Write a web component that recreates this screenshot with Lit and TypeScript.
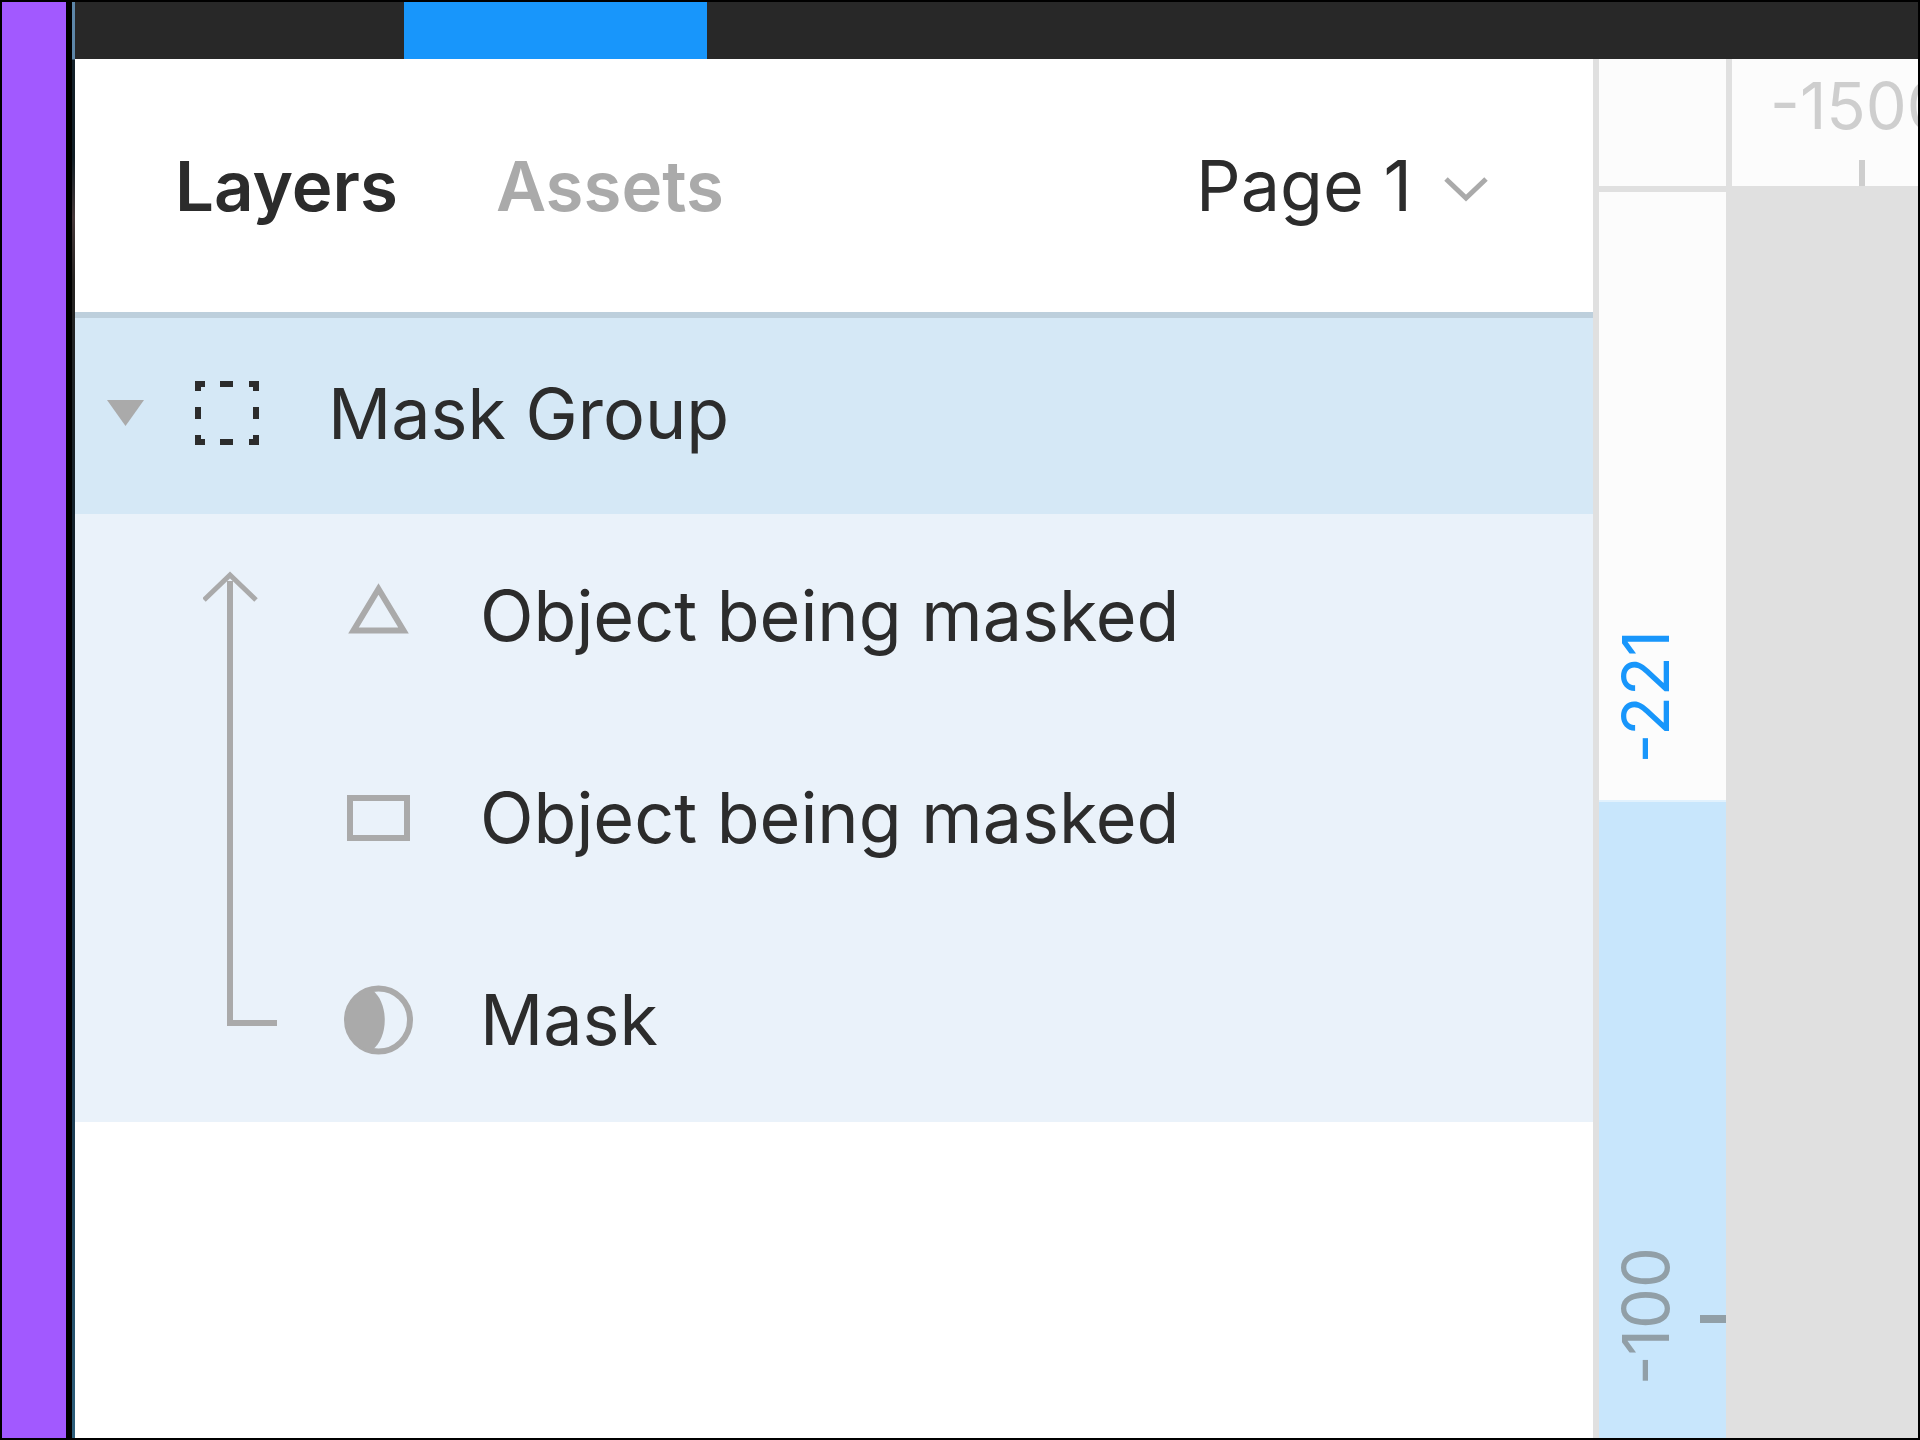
import { LitElement, html, css, svg } from "lit";
import { customElement, property } from "lit/decorators.js";

type Kind = "group" | "triangle" | "rectangle" | "mask";

const glyphs = {
  group: svg`<g fill="#2c2c2c">
    <path d="M4 3h10v6h-4v4h-6zM58 3h10v10h-6v-4h-4zM4 57h6v4h4v6h-10zM62 57h6v10h-10v-6h4z"/>
    <path d="M29 3h13v6h-13zM29 61h13v6h-13zM4 29h6v12h-6zM62 29h6v12h-6z"/>
  </g>`,
  triangle: svg`<path d="M35.500 9L60.500 50.500H10.500z" fill="none" stroke="#aaaaaa" stroke-width="6"/>`,
  rectangle: svg`<rect x="7" y="16" width="57" height="40" fill="none" stroke="#aaaaaa" stroke-width="6"/>`,
  mask: svg`<circle cx="35.500" cy="36" r="31.500" fill="none" stroke="#aaaaaa" stroke-width="6"/>
    <path d="M29 6C46 18 46 54 29 66C-6 61 -6 11 29 6z" fill="#aaaaaa"/>`,
};

@customElement("layer-icon")
class LayerIcon extends LitElement {
  @property() kind: Kind = "group";
  static styles = css`
    :host { display: block; flex: none; }
    .icon { display: block; width: 72px; height: 72px; }
  `;
  render() {
    return html`<svg class="icon" viewBox="0 0 72 72" aria-hidden="true">${glyphs[this.kind]}</svg>`;
  }
}

const children: { kind: Kind; name: string }[] = [
  { kind: "triangle", name: "Object being masked" },
  { kind: "rectangle", name: "Object being masked" },
  { kind: "mask", name: "Mask" },
];

@customElement("app-root")
class AppRoot extends LitElement {
  static styles = css`
    :host {
      display: block;
      font-family: Inter, "Liberation Sans", sans-serif;
      font-size: 70px;
      line-height: 84px;
      color: #2c2c2c;
    }
    * { box-sizing: border-box; }
    button, select {
      font: inherit;
      color: inherit;
      border: 0;
      margin: 0;
      padding: 0;
      background: none;
      white-space: nowrap;
    }
    .frame {
      display: flex;
      min-height: 100vh;
      border: 2px solid #000;
      overflow: hidden;
    }
    .accent { flex: none; width: 64px; background: #a259ff; }
    .edge {
      flex: none;
      width: 9px;
      border-left: 6px solid #000;
      background: linear-gradient(#5d86a8 57px, #14212a 58px, #101d25 155px, #46393a 215px, #262422 280px, #14212a 500px, #173247 1000px, #2d5f7c);
    }
    .app { flex: 1; min-width: 0; display: flex; flex-direction: column; }
    .toolbar { flex: none; display: flex; height: 57px; background: #282828; padding-left: 329px; }
    .tool { width: 303px; background: #1896fb; }
    .workspace { flex: 1; display: grid; grid-template-columns: minmax(0, 1fr) 133px 10vw; }
    .panel { background: #fff; }
    .tabs {
      display: flex;
      align-items: center;
      height: 253px;
      padding: 0 105px 0 100px;
    }
    .tablist { display: flex; gap: 98px; font-size: 69px; font-weight: 600; }
    .tab.idle { color: #aaaaaa; }
    .page { display: flex; align-items: center; gap: 32px; margin-left: auto; }
    .select { appearance: none; line-height: 84px; }
    .chevron { width: 44px; height: 26px; margin-top: 6px; }
    .row {
      display: flex;
      align-items: center;
      gap: 65px;
      width: 100%;
      height: 202px;
      padding-top: 2px;
      text-align: left;
    }
    .row.selected {
      gap: 0;
      padding-left: 31px;
      background: #d5e8f6;
      box-shadow: inset 0 6px #bdcfdc;
    }
    .row.selected .name { margin-left: 65px; }
    .caret { width: 38px; height: 28px; margin-right: 47px; }
    .nested { display: flex; background: #eaf2fa; padding: 0 0 2px 128px; }
    .arrow { flex: none; width: 74px; height: 456px; margin: 57px 66px 0 0; }
    .list { flex: 1; min-width: 0; margin: 0; padding: 0; list-style: none; }
    .ruler {
      display: flex;
      flex-direction: column;
      border-left: 6px solid #e0e0e0;
      background: #fcfcfc;
      font-size: 65px;
      line-height: 80px;
    }
    .corner { flex: none; height: 133px; border-right: 6px solid #e0e0e0; border-bottom: 6px solid #e0e0e0; margin-right: -6px; }
    .span { display: flex; flex: none; justify-content: space-between; align-items: flex-end; }
    .before { height: 610px; padding: 0 0 37px 7px; color: #1896fb; border-bottom: 2px solid #e1f1fd; }
    .covered { flex: 1; align-items: flex-start; padding: 445px 0 0 7px; background: #c8e6fc; color: #919fa7; }
    .reading { writing-mode: vertical-rl; transform: rotate(180deg); }
    .tick-y { width: 26px; height: 8px; margin-top: 68px; background: #919fa7; }
    .canvas { display: flex; flex-direction: column; min-width: 0; background: #e0e0e0; overflow: hidden; }
    .ruler-top {
      height: 127px;
      margin-left: 6px;
      padding: 7px 0 0 38px;
      background: #fcfcfc;
      color: #cecece;
      font-size: 65px;
      line-height: 80px;
      overflow: hidden;
    }
    .tick-x { width: 6px; height: 26px; margin: 14px 0 0 89px; background: #cecece; }
  `;

  render() {
    return html`
      <div class="frame">
        <div class="accent"></div>
        <div class="edge"></div>
        <div class="app">
          <div class="toolbar"><div class="tool"></div></div>
          <div class="workspace">
            <section class="panel">
              <header class="tabs">
                <div class="tablist">
                  <button class="tab">Layers</button>
                  <button class="tab idle">Assets</button>
                </div>
                <label class="page">
                  <select class="select" aria-label="Page"><option>Page 1</option></select>
                  <svg class="chevron" viewBox="0 0 44 26" aria-hidden="true"><path d="M2 3L22 22L42 3" fill="none" stroke="#aaaaaa" stroke-width="5"/></svg>
                </label>
              </header>
              <button class="row selected" aria-expanded="true">
                <svg class="caret" viewBox="0 0 38 28" aria-hidden="true"><path d="M1 0H38L19.500 26z" fill="#aaaaaa"/></svg>
                <layer-icon kind="group"></layer-icon>
                <span class="name">Mask Group</span>
              </button>
              <div class="nested">
                <svg class="arrow" viewBox="0 0 74 456" aria-hidden="true">
                  <path d="M1 29L27 4L53 29" fill="none" stroke="#aaaaaa" stroke-width="5"/>
                  <path d="M27 10V452H74" fill="none" stroke="#aaaaaa" stroke-width="6"/>
                </svg>
                <ul class="list">
                  ${children.map(
                    (c) => html`<li><button class="row"><layer-icon kind=${c.kind}></layer-icon><span>${c.name}</span></button></li>`
                  )}
                </ul>
              </div>
            </section>
            <div class="ruler">
              <div class="corner"></div>
              <div class="span before"><span class="reading">-221</span></div>
              <div class="span covered"><span class="reading">-100</span><div class="tick-y"></div></div>
            </div>
            <main class="canvas">
              <div class="ruler-top">-1500<div class="tick-x"></div></div>
            </main>
          </div>
        </div>
      </div>
    `;
  }
}
